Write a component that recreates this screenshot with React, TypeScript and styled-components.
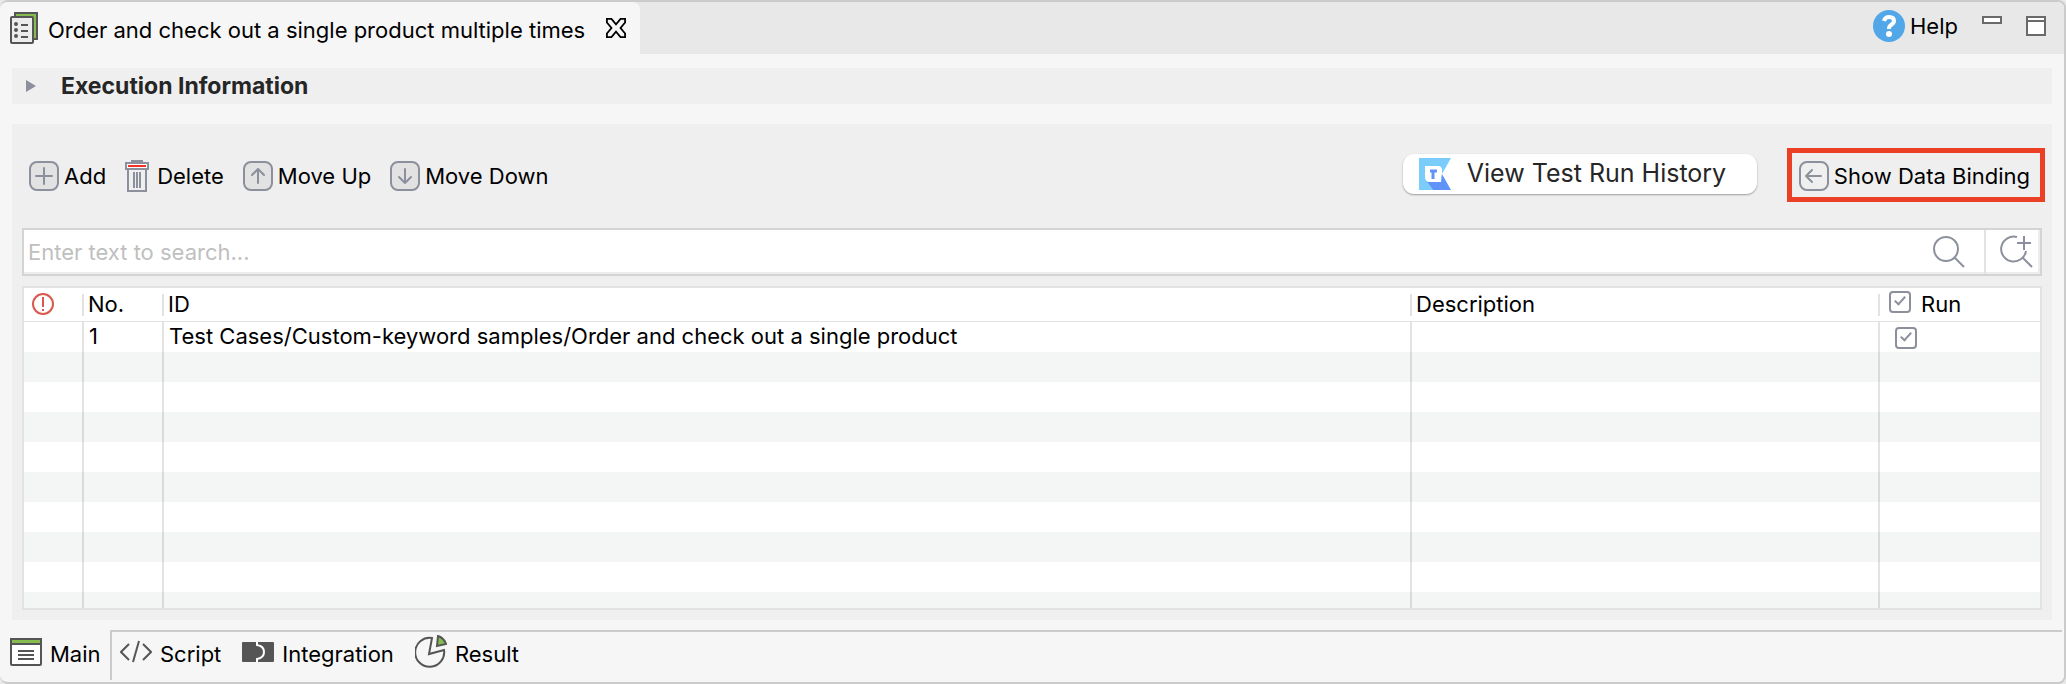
import React from "react";
import styled, { createGlobalStyle } from "styled-components";

const GlobalStyle = createGlobalStyle`
  *, *::before, *::after { box-sizing: border-box; }
  body { margin: 0; background: #e9e9e9; }
  button, input { font: inherit; color: inherit; }
  svg { display: block; flex: none; }
`;

const Window = styled.main`
  font-family: Inter, sans-serif;
  font-size: 22px;
  line-height: 28px;
  color: #000;
  background: #f6f6f6;
  border: solid #cbcbcb;
  border-width: 2px 2px 2px 0;
  border-radius: 8px;
  overflow: hidden;
`;

const TabBar = styled.header`
  display: flex;
  justify-content: space-between;
  height: 52px;
  background: #e8e8e8;
`;

const EditorTab = styled.div`
  display: flex;
  align-items: center;
  width: 640px;
  padding: 4px 14px 0 10px;
  background: #f6f6f6;
  border-radius: 8px 8px 0 0;
  white-space: nowrap;
  svg { margin-bottom: 4px; }
`;

const TabTitle = styled.span`
  margin-left: 10px;
  flex: 1;
`;

const PlainButton = styled.button`
  display: flex;
  align-items: center;
  gap: 5px;
  padding: 0;
  border: 0;
  background: none;
  white-space: nowrap;
  cursor: pointer;
`;

const WindowActions = styled.div`
  display: flex;
  align-items: center;
  gap: 24px;
  padding: 0 18px 4px 0;
`;

const Content = styled.div`
  display: flex;
  flex-direction: column;
  gap: 20px;
  padding: 14px 12px 10px;
`;

const SectionHeader = styled.button`
  display: flex;
  align-items: center;
  gap: 25px;
  width: 100%;
  height: 36px;
  padding: 0 14px;
  border: 0;
  background: #efefef;
  color: #262626;
  font-size: 23px;
  font-weight: 700;
  text-align: left;
`;

const Panel = styled.section`
  padding: 24px 10px 10px;
  background: #efefef;
`;

const Toolbar = styled.div`
  display: flex;
  align-items: center;
  height: 54px;
  margin: 0 -3px 26px 7px;
`;

const ToolGroup = styled.div`
  display: flex;
  flex: 1;
  gap: 19px;
  padding-top: 2px;
`;

const HistoryButton = styled.button`
  display: flex;
  align-items: center;
  gap: 16px;
  width: 354px;
  height: 40px;
  margin: 0 30px 2px 0;
  padding: 0 16px 2px;
  border: 0;
  border-radius: 11px;
  background: #fff;
  box-shadow: 0 1px 2px rgba(0, 0, 0, 0.35);
  color: #262626;
  font-size: 25px;
  white-space: nowrap;
  svg { margin-top: 2px; }
`;

const Highlight = styled.div`
  display: flex;
  align-items: center;
  height: 54px;
  padding: 2px 10px 0 7px;
  border: 5px solid #ec4026;
`;

const SearchBar = styled.div`
  display: flex;
  align-items: stretch;
  height: 48px;
  margin-bottom: 10px;
  border: 2px solid #d4d4d4;
  background: #fff;
  box-shadow: inset -2px -2px #ededed;
`;

const SearchInput = styled.input`
  flex: 1;
  min-width: 0;
  padding: 0 4px;
  border: 0;
  outline: 0;
  background: none;
  &::placeholder { color: #bfbfbf; opacity: 1; }
`;

const SearchButton = styled(PlainButton)<{ $divided?: boolean }>`
  justify-content: center;
  width: ${(p) => (p.$divided ? 56 : 70)}px;
  padding-left: ${(p) => (p.$divided ? 8 : 0)}px;
  border-left: ${(p) => (p.$divided ? "2px solid #e2e2e2" : "0")};
`;

const TableFrame = styled.div`
  height: 324px;
  overflow: hidden;
  border: 2px solid #e2e2e2;
  background: #fff;
`;

const Table = styled.table`
  width: 100%;
  table-layout: fixed;
  border-collapse: separate;
  border-spacing: 0;
`;

const Col = styled.col<{ $width?: number }>`
  width: ${(p) => (p.$width ? `${p.$width}px` : "auto")};
`;

const HeadCell = styled.th`
  height: 34px;
  padding: 0 0 2px 4px;
  border-bottom: 1px solid #e2e2e2;
  background: linear-gradient(#e2e2e2, #e2e2e2) right 6px / 2px 22px no-repeat;
  font-weight: 400;
  text-align: left;
  white-space: nowrap;
  &:first-child { padding-left: 8px; }
  &:last-child { background: none; }
`;

const BodyRow = styled.tr`
  &:nth-child(even) { background: #f4f5f5; }
`;

const Cell = styled.td`
  height: 30px;
  padding: 0 0 2px 5px;
  border-right: 2px solid rgba(0, 0, 0, 0.11);
  white-space: nowrap;
  &:last-child { border-right: 0; padding: 2px 0 0 15px; }
`;

const CheckLabel = styled.label`
  display: flex;
  align-items: center;
  gap: 10px;
  padding-left: 5px;
  input { margin-bottom: 4px; }
`;

const CheckBox = styled.input`
  appearance: none;
  display: block;
  width: 22px;
  height: 22px;
  margin: 0;
  border: 2px solid #8b909c;
  border-radius: 4px;
  background: #fff;
  &:checked::after {
    content: "";
    display: block;
    width: 6px;
    height: 11px;
    margin: 1px 0 0 6px;
    border: solid #8b909c;
    border-width: 0 2px 2px 0;
    transform: rotate(42deg);
  }
`;

const BottomTabs = styled.nav`
  display: flex;
  height: 52px;
  svg { margin-bottom: 4px; }
`;

const ActiveTab = styled(PlainButton)`
  gap: 8px;
  width: 110px;
  padding: 0 0 4px 10px;
`;

const OtherTabs = styled.div`
  display: flex;
  flex: 1;
  gap: 21px;
  height: 50px;
  margin-right: 2px;
  padding: 0 0 0 8px;
  border: solid #cbcbcb;
  border-width: 2px 0 0 2px;
`;

const PageTab = styled(PlainButton)`
  gap: 8px;
  padding-bottom: 4px;
`;

const gray = "#8b909c";

const TestSuiteIcon = () => (
  <svg width="28" height="32" viewBox="0 0 28 32" fill="none">
    <path d="M5 5V1H27V27H23" fill="#86bc4f" stroke="#555" strokeWidth="2" />
    <rect x="1" y="5" width="22" height="26" rx="1" fill="#ececec" stroke="#555" strokeWidth="2" />
    <path d="M11 13h7M11 19h7M11 25h7" stroke="#555" strokeWidth="2" />
    <path d="M6 12v.01M6 18v.01M6 24v.01" stroke="#555" strokeWidth="4" strokeLinecap="round" />
  </svg>
);

const CloseIcon = () => (
  <svg width="20" height="20" viewBox="0 0 22 22" fill="none" stroke="#000" strokeWidth="2">
    <path d="M1 1h5l5 6 5-6h5v4l-5 6 5 6v4h-5l-5-6-5 6H1v-4l5-6-5-6z" />
  </svg>
);

type BoxedProps = { d: string; fill?: string };
const BoxedIcon = ({ d, fill = "#e3e2e3" }: BoxedProps) => (
  <svg width="30" height="30" viewBox="0 0 30 30" fill="none" stroke={gray} strokeWidth="2">
    <rect x="1" y="1" width="28" height="28" rx="7" fill={fill} />
    <path d={d} strokeLinecap="round" strokeLinejoin="round" />
  </svg>
);

const TrashIcon = () => (
  <svg width="27" height="32" viewBox="0 0 27 32" fill="none" stroke={gray} strokeWidth="2">
    <path d="M7 2V1h10v1" />
    <rect x="1" y="3" width="22" height="6" fill="#fff" />
    <path d="M3 6h18" stroke="#f03328" />
    <path d="M3 9v22h18V9M9 12v16M12 12v16M15 12v16" />
    <path d="M10.500 12v16M13.500 12v16" stroke="#efefef" strokeWidth="1" />
  </svg>
);

const HistoryIcon = () => (
  <svg width="32" height="32" viewBox="0 0 32 32">
    <path d="M0 0h32l-9 16-1 8H14L8 24l6 8H0z" fill="#7accfb" />
    <path d="M8 24h14l1-8 9 16H14z" fill="#5f93f7" />
    <path d="M6 8h13q4 0 4 4v4l-1 3v5H11q-5 0-5-5z" fill="#fff" />
    <path d="M11 13h7M14 13v8" stroke="#5f93f7" strokeWidth="3" />
  </svg>
);

const SearchIcon = () => (
  <svg width="34" height="34" viewBox="0 0 34 34" fill="none" stroke={gray} strokeWidth="2">
    <circle cx="14" cy="14" r="12" />
    <path d="M22 22l10 10" />
  </svg>
);

const SearchPlusIcon = () => (
  <svg width="34" height="34" viewBox="0 0 34 34" fill="none" stroke={gray} strokeWidth="2">
    <path d="M17 2A12.500 12.500 0 1 0 26 16M22 22l10 10M24 1v14M17 8h14" />
  </svg>
);

const AlertIcon = () => (
  <svg width="22" height="22" viewBox="0 0 22 22" fill="none" stroke="#d9594f" strokeWidth="2">
    <circle cx="11" cy="11" r="10" />
    <path d="M11 4v10M11 16v2" />
  </svg>
);

const HelpIcon = () => (
  <svg width="32" height="32" viewBox="0 0 32 32" fill="none">
    <circle cx="16" cy="16" r="16" fill="#52a7e8" />
    <path d="M11 11q1-4 5-4 5 0 5 4 0 2-3 4-2 1-2 4" stroke="#fff" strokeWidth="4" />
    <circle cx="16" cy="24" r="3" fill="#fff" />
  </svg>
);

const MinimizeIcon = () => (
  <svg width="20" height="20" viewBox="0 0 20 20">
    <rect x="1" y="1" width="18" height="6" fill="#fff" stroke="#6a6a6a" strokeWidth="2" />
  </svg>
);

const MaximizeIcon = () => (
  <svg width="20" height="20" viewBox="0 0 20 20" stroke="#6a6a6a" strokeWidth="2">
    <path d="M1 1h18v18H1zM1 5h18" fill="#fff" />
  </svg>
);

const MainIcon = () => (
  <svg width="32" height="28" viewBox="0 0 32 28" stroke="#555" strokeWidth="2">
    <rect x="1" y="1" width="30" height="26" rx="1" fill="#fff" />
    <path d="M1 1h30v5H1z" fill="#86bc4f" />
    <path d="M8 13h16M8 17h16M8 21h16" />
  </svg>
);

const ScriptIcon = () => (
  <svg width="32" height="28" viewBox="0 0 32 28" fill="none" stroke="#555" strokeWidth="2">
    <path d="M9 6L1 14l8 8M23 6l8 8-8 8M19 3l-6 21" />
  </svg>
);

const IntegrationIcon = () => (
  <svg width="32" height="20" viewBox="0 0 32 20">
    <rect width="32" height="20" rx="1" fill="#555" />
    <path d="M15 0v3q7 1 7 7t-7 7v3" fill="none" stroke="#fff" strokeWidth="2" />
  </svg>
);

const ResultIcon = () => (
  <svg width="32" height="34" viewBox="0 0 32 34" fill="none" stroke="#555" strokeWidth="2">
    <path d="M17 3A14.500 14.500 0 1 0 29 15L14 19z" />
    <path d="M23 1l-1 10 9-2q-2-6-8-8z" fill="#86bc4f" />
  </svg>
);

const testCases = [
  { no: 1, id: "Test Cases/Custom-keyword samples/Order and check out a single product", description: "" },
];
const emptyRows = Array.from({ length: 9 }, (_, i) => i);

export default function App() {
  return (
    <>
      <GlobalStyle />
      <Window>
        <TabBar>
          <EditorTab>
            <TestSuiteIcon />
            <TabTitle>Order and check out a single product multiple times</TabTitle>
            <PlainButton aria-label="Close tab"><CloseIcon /></PlainButton>
          </EditorTab>
          <WindowActions>
            <PlainButton><HelpIcon />Help</PlainButton>
            <PlainButton aria-label="Minimize"><MinimizeIcon /></PlainButton>
            <PlainButton aria-label="Maximize"><MaximizeIcon /></PlainButton>
          </WindowActions>
        </TabBar>
        <Content>
          <SectionHeader aria-expanded={false}>
            <svg width="10" height="12" viewBox="0 0 10 12"><path d="M0 0l10 6-10 6z" fill={gray} /></svg>
            Execution Information
          </SectionHeader>
          <Panel>
            <Toolbar>
              <ToolGroup>
                <PlainButton><BoxedIcon d="M15 7v16M7 15h16" />Add</PlainButton>
                <PlainButton><TrashIcon />Delete</PlainButton>
                <PlainButton><BoxedIcon d="M15 22V8M9 14l6-6 6 6" />Move Up</PlainButton>
                <PlainButton><BoxedIcon d="M15 8v14M9 16l6 6 6-6" />Move Down</PlainButton>
              </ToolGroup>
              <HistoryButton><HistoryIcon />View Test Run History</HistoryButton>
              <Highlight>
                <PlainButton><BoxedIcon d="M22 15H7M13 9l-6 6 6 6" fill="none" />Show Data Binding</PlainButton>
              </Highlight>
            </Toolbar>
            <SearchBar>
              <SearchInput aria-label="Search" placeholder="Enter text to search..." />
              <SearchButton aria-label="Search"><SearchIcon /></SearchButton>
              <SearchButton $divided aria-label="Advanced search"><SearchPlusIcon /></SearchButton>
            </SearchBar>
            <TableFrame>
              <Table>
                <colgroup>
                  <Col $width={60} />
                  <Col $width={80} />
                  <Col />
                  <Col $width={468} />
                  <Col $width={160} />
                </colgroup>
                <thead>
                  <tr>
                    <HeadCell aria-label="Status"><AlertIcon /></HeadCell>
                    <HeadCell>No.</HeadCell>
                    <HeadCell>ID</HeadCell>
                    <HeadCell>Description</HeadCell>
                    <HeadCell>
                      <CheckLabel><CheckBox type="checkbox" defaultChecked />Run</CheckLabel>
                    </HeadCell>
                  </tr>
                </thead>
                <tbody>
                  {testCases.map((row) => (
                    <BodyRow key={row.no}>
                      <Cell />
                      <Cell>{row.no}</Cell>
                      <Cell>{row.id}</Cell>
                      <Cell>{row.description}</Cell>
                      <Cell><CheckBox type="checkbox" defaultChecked aria-label={`Run test case ${row.no}`} /></Cell>
                    </BodyRow>
                  ))}
                  {emptyRows.map((i) => (
                    <BodyRow key={i}><Cell /><Cell /><Cell /><Cell /><Cell /></BodyRow>
                  ))}
                </tbody>
              </Table>
            </TableFrame>
          </Panel>
        </Content>
        <BottomTabs>
          <ActiveTab><MainIcon />Main</ActiveTab>
          <OtherTabs>
            <PageTab><ScriptIcon />Script</PageTab>
            <PageTab><IntegrationIcon />Integration</PageTab>
            <PageTab><ResultIcon />Result</PageTab>
          </OtherTabs>
        </BottomTabs>
      </Window>
    </>
  );
}
